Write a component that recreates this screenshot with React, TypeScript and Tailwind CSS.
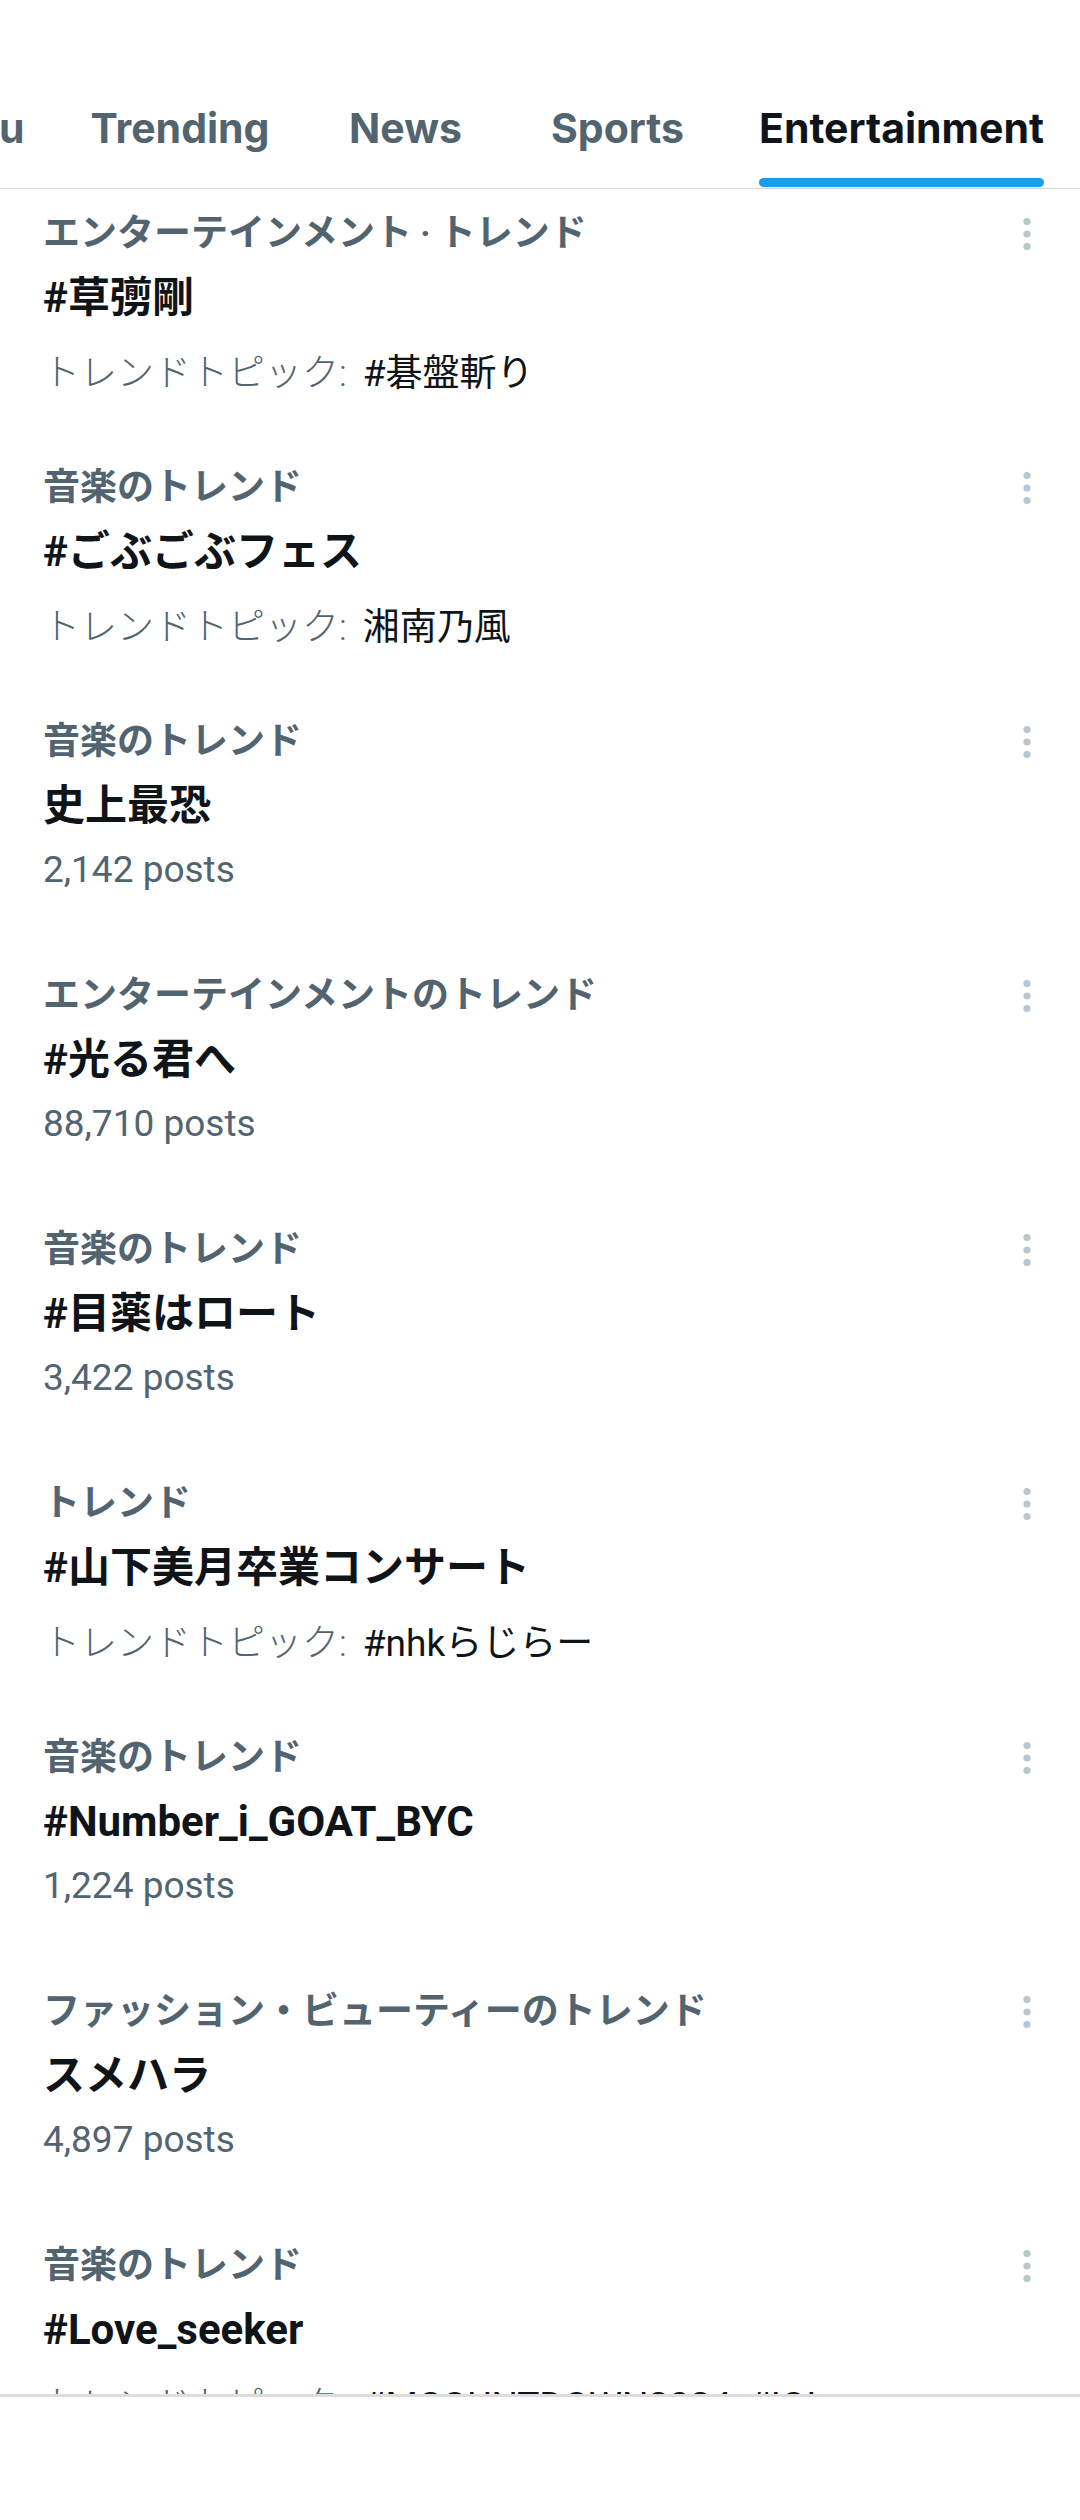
import React from "react";

type Trend = {
  category: React.ReactNode;
  title: string;
  posts?: string;
  topic?: string;
};

const trends: Trend[] = [
  {
    category: (
      <>
        エンターテインメント<span className="mx-[8px]">·</span>トレンド
      </>
    ),
    title: "#草彅剛",
    topic: "#碁盤斬り",
  },
  { category: "音楽のトレンド", title: "#ごぶごぶフェス", topic: "湘南乃風" },
  { category: "音楽のトレンド", title: "史上最恐", posts: "2,142 posts" },
  { category: "エンターテインメントのトレンド", title: "#光る君へ", posts: "88,710 posts" },
  { category: "音楽のトレンド", title: "#目薬はロート", posts: "3,422 posts" },
  { category: "トレンド", title: "#山下美月卒業コンサート", topic: "#nhkらじらー" },
  { category: "音楽のトレンド", title: "#Number_i_GOAT_BYC", posts: "1,224 posts" },
  { category: "ファッション・ビューティーのトレンド", title: "スメハラ", posts: "4,897 posts" },
  { category: "音楽のトレンド", title: "#Love_seeker", topic: "#MCOUNTDOWN2024, #IOI" },
];

const tabs = [
  { label: "For you", width: "w-[214px] ml-[-157px]" },
  { label: "Trending", width: "w-[246px]" },
  { label: "News", width: "w-[205px]" },
  { label: "Sports", width: "w-[219px]" },
  { label: "Entertainment", width: "w-[349px]", active: true },
];

function MoreDots() {
  return (
    <svg width="24" height="40" viewBox="0 0 24 40" aria-hidden="true">
      <circle cx="12" cy="7.5" r="3.6" fill="#b7c6cf" />
      <circle cx="12" cy="20" r="3.6" fill="#b7c6cf" />
      <circle cx="12" cy="32.5" r="3.6" fill="#b7c6cf" />
    </svg>
  );
}

function TrendRow({ trend }: { trend: Trend }) {
  return (
    <div className="h-[254px] pl-[43px] pr-[41px] pt-[21px]">
      <div className="flex h-[48px] items-center justify-between">
        <span className="text-[37px] leading-[48px] font-semibold text-[#536471] whitespace-nowrap">
          {trend.category}
        </span>
        <MoreDots />
      </div>
      <div className="mt-[12px] text-[42px] leading-[56px] font-bold text-[#0f1419] whitespace-nowrap">
        {trend.title}
      </div>
      {trend.posts ? (
        <div className="mt-[12px] text-[37px] leading-[48px] text-[#536471] font-['Roboto',sans-serif]">
          {trend.posts}
        </div>
      ) : (
        <div className="mt-[24px] text-[37px] leading-[48px] whitespace-nowrap">
          <span className="text-[#536471] font-light">トレンドトピック:</span>
          <span className="ml-[16px] text-[#0f1419]">{trend.topic}</span>
        </div>
      )}
    </div>
  );
}

export default function App() {
  return (
    <div className="w-[1080px] h-[2520px] bg-white overflow-hidden font-['Roboto','Noto_Sans_CJK_JP',sans-serif]">
      <div className="h-[70px]" />
      <nav className="flex h-[119px] border-b border-[#cfd9de] overflow-hidden">
        {tabs.map((tab) => (
          <div key={tab.label} className={`${tab.width} flex-none flex justify-center`}>
            <div className="flex flex-col">
              <div
                className={`flex-1 flex items-center pt-[10px] text-[41px] font-bold font-['Inter',sans-serif] whitespace-nowrap ${
                  tab.active ? "text-[#0f1419]" : "text-[#536471]"
                }`}
              >
                {tab.label}
              </div>
              <div className={`h-[9px] mb-[1px] rounded-full ${tab.active ? "bg-[#1d9bf0]" : "bg-transparent"}`} />
            </div>
          </div>
        ))}
      </nav>
      <div className="h-[2205px] overflow-hidden">
        {trends.map((t, i) => (
          <TrendRow key={i} trend={t} />
        ))}
      </div>
      <div className="border-t-[3px] border-[#dddddd] h-[126px]" />
    </div>
  );
}
